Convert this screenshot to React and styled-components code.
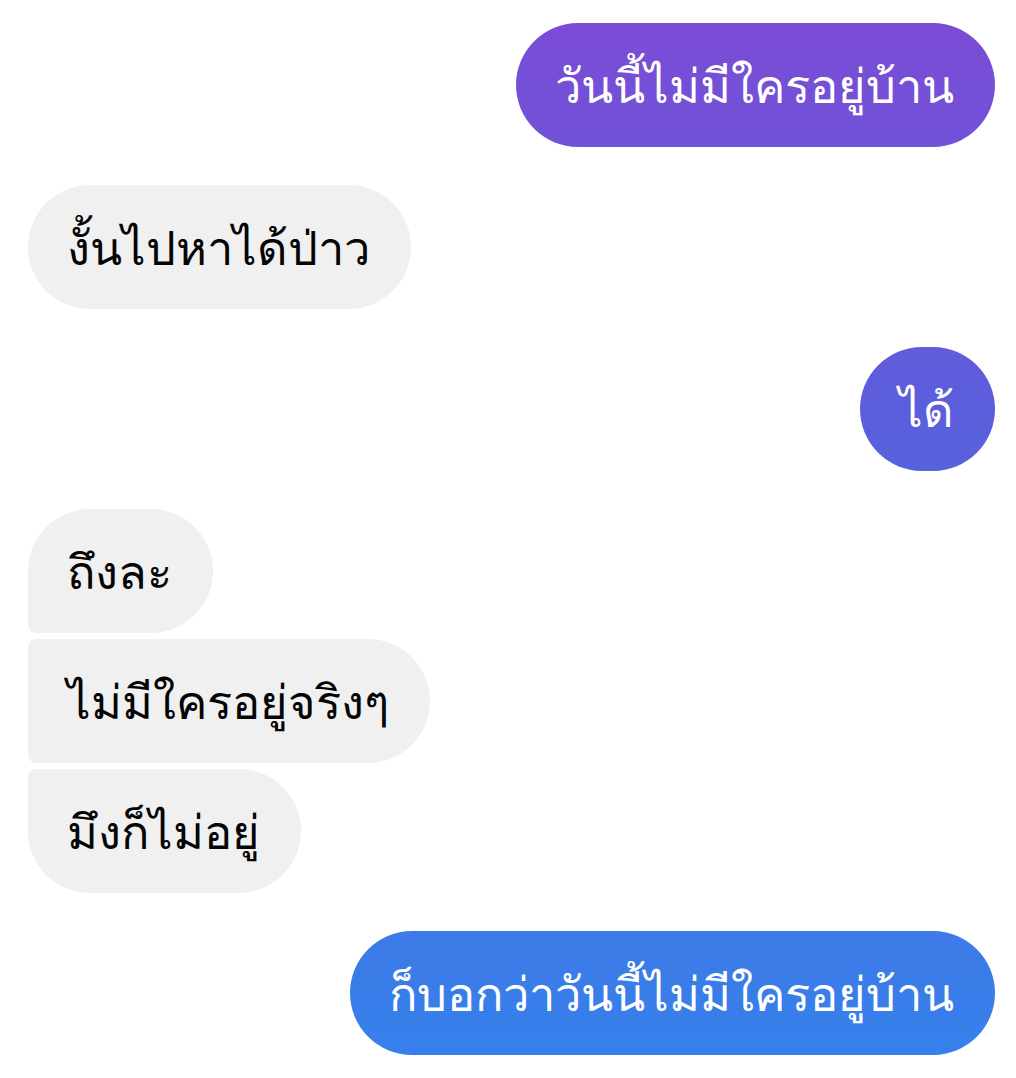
import React from "react";
import styled, { createGlobalStyle } from "styled-components";

const GlobalStyle = createGlobalStyle`
  html, body {
    margin: 0;
    background: #ffffff;
  }
  body {
    font-family: "Noto Sans", "DejaVu Sans", "Liberation Sans", sans-serif;
  }
`;

const Thread = styled.div`
  display: flex;
  flex-direction: column;
  gap: 38px;
  padding: 23px 21px 24px 28px;
`;

const Group = styled.div`
  display: flex;
  flex-direction: column;
  align-items: ${(p) => (p.$mine ? "flex-end" : "flex-start")};
  gap: 6px;
`;

const Bubble = styled.div`
  box-sizing: border-box;
  height: 124px;
  display: flex;
  align-items: center;
  justify-content: center;
  padding: 0 41px 0 39px;
  font-size: 47px;
  line-height: 1;
  white-space: nowrap;
  border-radius: ${(p) => p.$radius || "62px"};
  color: ${(p) => (p.$mine ? "#ffffff" : "#050505")};
  background: ${(p) =>
    p.$mine
      ? "linear-gradient(180deg, #7d4bd6 0px, #5c5edb 400px, #377fea 1030px) fixed"
      : "#f0f0f0"};
`;

const messages = [
  { mine: true, lines: ["วันนี้ไม่มีใครอยู่บ้าน"] },
  { mine: false, lines: ["งั้นไปหาได้ป่าว"] },
  { mine: true, lines: ["ได้"] },
  { mine: false, lines: ["ถึงละ", "ไม่มีใครอยู่จริงๆ", "มึงก็ไม่อยู่"] },
  { mine: true, lines: ["ก็บอกว่าวันนี้ไม่มีใครอยู่บ้าน"] },
];

// corner shape for a line inside a run of messages from one side
function cornerRadius(mine, index, count) {
  if (count === 1) return "62px";
  const big = "62px";
  const small = "8px";
  const top = index === 0 ? big : small;
  const bottom = index === count - 1 ? big : small;
  return mine
    ? `${big} ${top} ${bottom} ${big}`
    : `${top} ${big} ${big} ${bottom}`;
}

export default function App() {
  return (
    <>
      <GlobalStyle />
      <Thread>
        {messages.map((m, i) => (
          <Group key={i} $mine={m.mine}>
            {m.lines.map((line, j) => (
              <Bubble
                key={j}
                $mine={m.mine}
                $radius={cornerRadius(m.mine, j, m.lines.length)}
              >
                {line}
              </Bubble>
            ))}
          </Group>
        ))}
      </Thread>
    </>
  );
}
